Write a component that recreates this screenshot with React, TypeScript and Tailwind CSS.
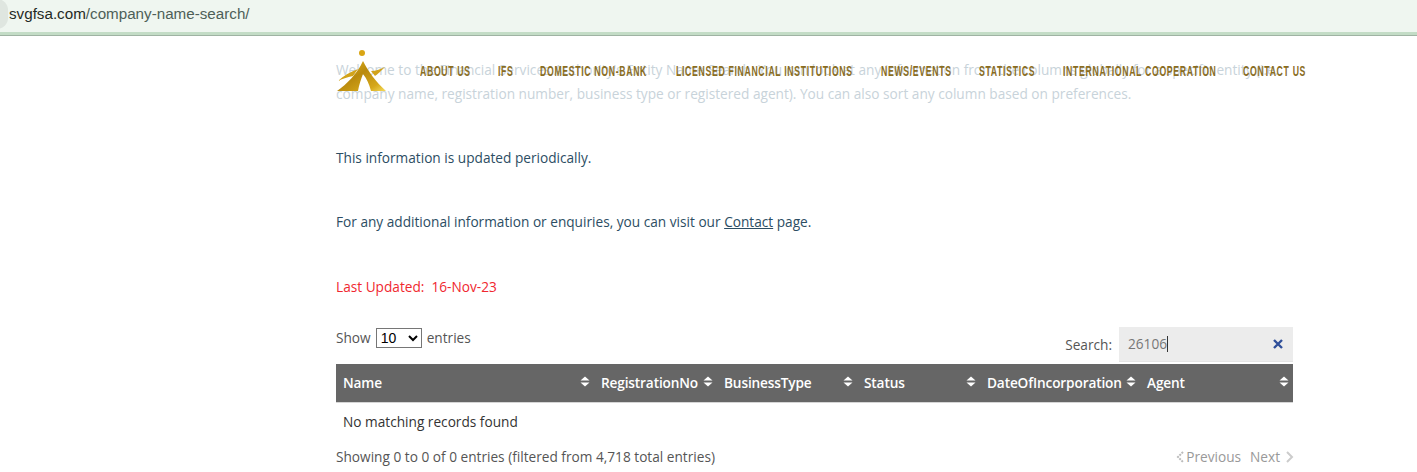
const nav: [string, string][] = [
  ['ABOUT US', 'w-[51px]'],
  ['IFS', 'w-[15px]'],
  ['DOMESTIC NON-BANK', 'w-[109px]'],
  ['LICENSED FINANCIAL INSTITUTIONS', 'w-[178px]'],
  ['NEWS/EVENTS', 'w-[71px]'],
  ['STATISTICS', 'w-[57px]'],
  ['INTERNATIONAL COOPERATION', 'w-[153px]'],
  ['CONTACT US', 'w-[63px]'],
];

const columns: [string, string][] = [
  ['Name', 'w-[258px]'],
  ['RegistrationNo', 'w-[123px]'],
  ['BusinessType', 'w-[140px]'],
  ['Status', 'w-[123px]'],
  ['DateOfIncorporation', 'w-[160px]'],
  ['Agent', 'flex-1'],
];

function SortIcon() {
  return (
    <svg width="10" height="11" viewBox="0 0 10 11" className="absolute right-[4px] top-[12px]">
      <path d="M5 0.5 L9.5 4.5 H0.5 Z" fill="#fff" />
      <path d="M5 10.5 L9.5 6.5 H0.5 Z" fill="#fff" />
    </svg>
  );
}

function Logo() {
  return (
    <svg width="51" height="44" viewBox="0 0 51 44" className="absolute left-[336px] top-[49px]">
      <defs>
        <linearGradient id="gold" x1="0" y1="0" x2="1" y2="1">
          <stop offset="0" stopColor="#e8bb22" />
          <stop offset="0.45" stopColor="#b98a0e" />
          <stop offset="0.8" stopColor="#d6a81a" />
          <stop offset="1" stopColor="#f5dc5c" />
        </linearGradient>
      </defs>
      <circle cx="26" cy="4" r="3" fill="#d9a514" />
      <path d="M27 12 C32 22 40 33 50 42 H35 C33 35 31 30 27 25 C25 30 23 36 22 42 H1 C11 35 21 25 27 12 Z" fill="url(#gold)" />
      <path d="M2 32 C7 27 14 23 22 20 L17 27 C11 28 6 30 2 32 Z" fill="#d2a31a" />
      <path d="M35 22 C40 22 45 20 49 18 C45 22 42 25 39 27 Z" fill="#d2a31a" />
    </svg>
  );
}

export default function App() {
  return (
    <div className="relative h-[472px] w-[1417px] overflow-hidden bg-white font-['Open_Sans',sans-serif] text-[13.67px] leading-[24px] text-[#2c4d63]">
      {/* Browser address bar */}
      <div className="relative h-[36px] border-b-[1px] border-b-[#9fb3a3]">
        <div className="h-[32px] bg-[#eff6f0] pl-[9px] font-['Liberation_Sans',sans-serif] text-[15.2px] leading-[28px]">
          <span className="text-[#1f2a24]">svgfsa.com</span>
          <span className="text-[#4e5f58]">/company-name-search/</span>
        </div>
        <div className="h-[3px] bg-[#c3dcc6]" />
        <div className="absolute left-[-14px] top-[-1px] h-[30px] w-[22px] rounded-full bg-[#dfe6e0]" />
      </div>

      {/* Page header, sits over the intro text */}
      <Logo />
      <nav className="absolute left-[420px] top-[62px] flex h-[18px] gap-[27px] font-['Liberation_Sans',sans-serif] text-[14px] font-bold leading-[18px] text-[#8a6d1f]">
        {nav.map(([label, w]) => (
          <span key={label} className={`${w} inline-block whitespace-nowrap`}>
            <span className="inline-block origin-left scale-x-[0.62] tracking-[1.1px]">{label}</span>
          </span>
        ))}
      </nav>

      {/* Content */}
      <main className="ml-[336px] w-[957px] pt-[22px]">
        <p className="w-[957px] text-[#c8d3da]">
          Welcome to the Financial Services Authority's Entity Name Search. You can look at any information from the columns globally for a specific entity (i.e. company name, registration number, business type or registered agent). You can also sort any column based on preferences.
        </p>
        <p className="mt-[40px]">This information is updated periodically.</p>
        <p className="mt-[40px]">
          For any additional information or enquiries, you can visit our <a className="underline">Contact</a> page.
        </p>
        <p className="mt-[41px] text-[#f0272f]">Last Updated:&nbsp; 16-Nov-23</p>

        <div className="mt-[27px] flex h-[38px] items-start justify-between text-[#555]">
          <div className="flex items-center">
            Show
            <select className="mx-[5px] h-[20px] w-[46px] border border-[#767676] font-['Liberation_Sans',sans-serif] text-[14px] text-black">
              <option>10</option>
            </select>
            entries
          </div>
          <div className="mt-[1px] flex items-center">
            <span className="mr-[7px] mt-[1px]">Search:</span>
            <div className="flex h-[35px] w-[174px] items-center justify-between border-b border-[#e4e4e4] bg-[#ececec] pl-[9px] pr-[10px] text-[#777]">
              <span className="border-r border-[#333] leading-[16px]">26106</span>
              <svg width="10" height="10" viewBox="0 0 10 10">
                <path d="M1 1 L9 9 M9 1 L1 9" stroke="#2f4f9a" strokeWidth="2.4" />
              </svg>
            </div>
          </div>
        </div>

        <div className="flex h-[39px] items-center border-b border-[#d5d5d5] bg-[#666] font-semibold tracking-[-0.15px] text-white">
          {columns.map(([label, w]) => (
            <div key={label} className={`${w} relative h-full pl-[7px] leading-[38px]`}>
              {label}
              <SortIcon />
            </div>
          ))}
        </div>

        <div className="h-[39px] pl-[7px] leading-[38px] text-[#333]">No matching records found</div>

        <div className="mt-[3px] flex items-center justify-between text-[#555]">
          <span>Showing 0 to 0 of 0 entries (filtered from 4,718 total entries)</span>
          <div className="flex items-center text-[#999]">
            <svg width="9" height="12" viewBox="0 0 9 12" className="mr-[1px]">
              <path d="M7 1 L2 6 L7 11" fill="none" stroke="#bbb" strokeWidth="2" strokeDasharray="2 1" />
            </svg>
            <span>Previous</span>
            <span className="ml-[9px]">Next</span>
            <svg width="9" height="12" viewBox="0 0 9 12" className="ml-[5px] mr-[-1px]">
              <path d="M2 1 L7 6 L2 11" fill="none" stroke="#ccc" strokeWidth="2" />
            </svg>
          </div>
        </div>
      </main>
    </div>
  );
}
